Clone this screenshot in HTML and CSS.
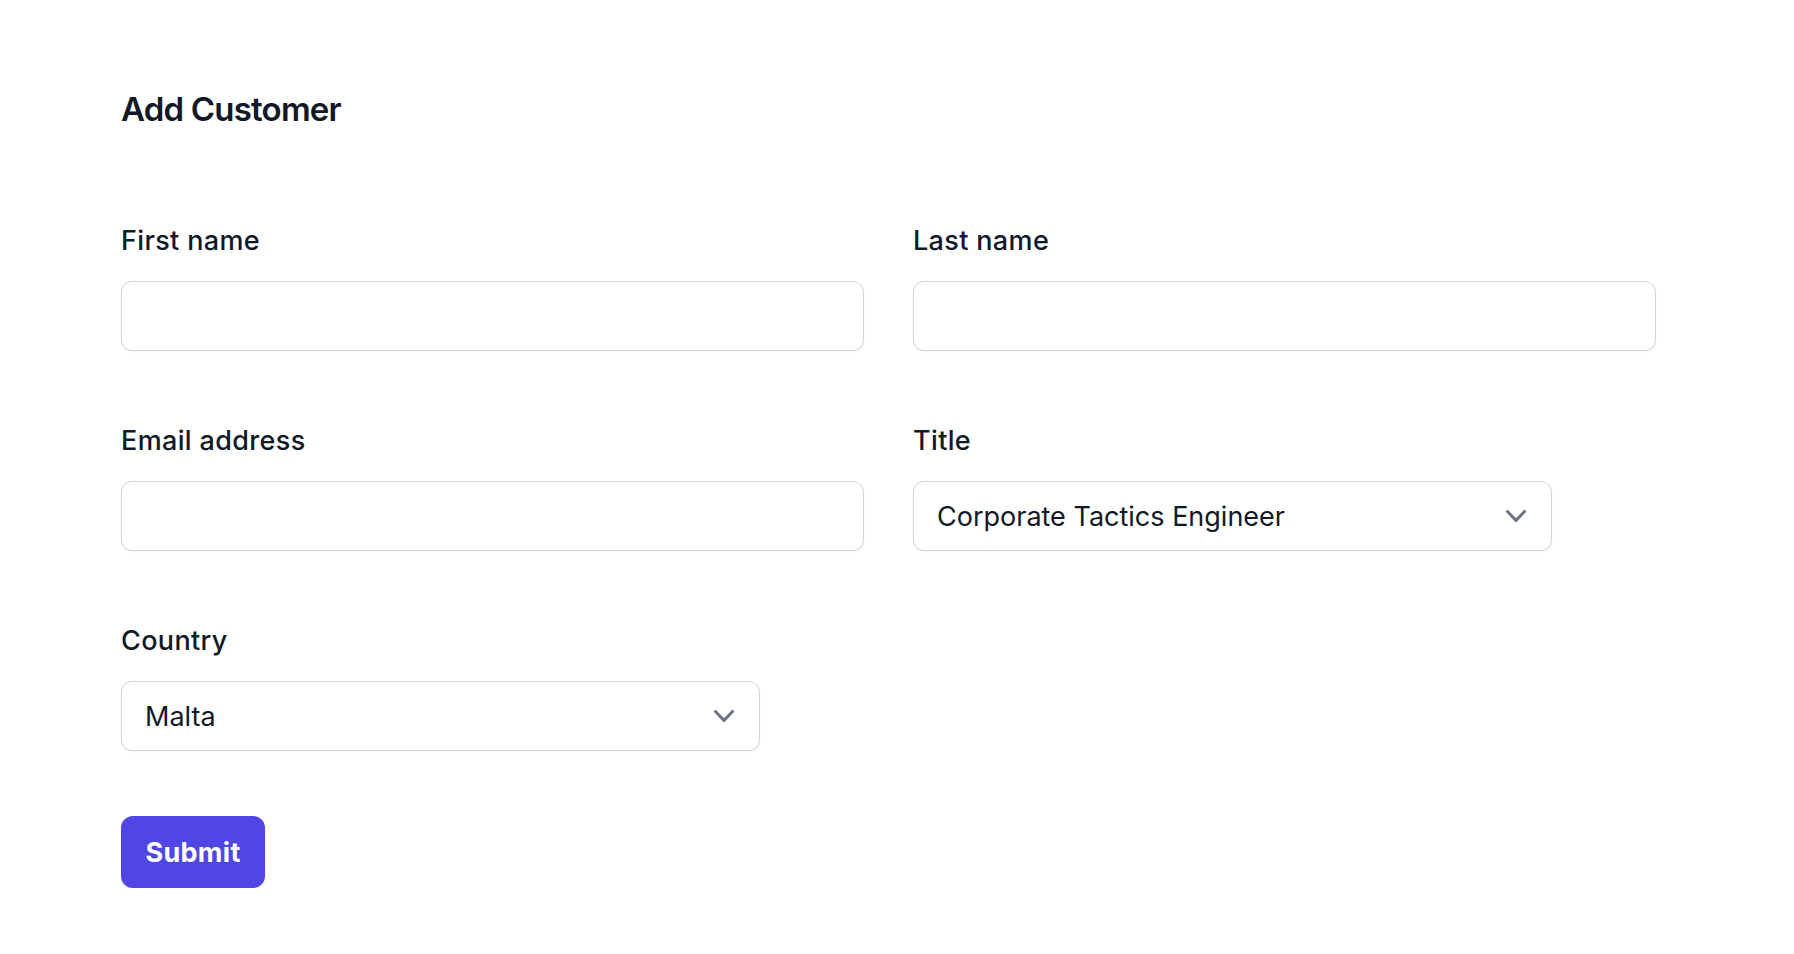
FILE: index.html
```html
<!DOCTYPE html>
<html lang="en">
<head>
<meta charset="utf-8">
<title>Add Customer</title>
<link rel="stylesheet" href="styles.css">
</head>
<body>
<main class="page">
  <h1 class="heading">Add Customer</h1>
  <form class="form">
    <div class="grid">
      <div class="field">
        <label class="label" for="first">First name</label>
        <input class="control" id="first" type="text">
      </div>
      <div class="field">
        <label class="label" for="last">Last name</label>
        <input class="control" id="last" type="text">
      </div>
      <div class="field">
        <label class="label" for="email">Email address</label>
        <input class="control" id="email" type="email">
      </div>
      <div class="field">
        <label class="label" for="title">Title</label>
        <div class="select-wrap">
          <select class="control select" id="title">
            <option>Corporate Tactics Engineer</option>
          </select>
          <svg class="chevron" viewBox="0 0 20 20" fill="currentColor" aria-hidden="true"><path fill-rule="evenodd" d="M5.23 7.21a.75.75 0 011.06.02L10 11.168l3.71-3.938a.75.75 0 111.08 1.04l-4.25 4.5a.75.75 0 01-1.08 0l-4.25-4.5a.75.75 0 01.02-1.06z" clip-rule="evenodd"/></svg>
        </div>
      </div>
      <div class="field">
        <label class="label" for="country">Country</label>
        <div class="select-wrap">
          <select class="control select" id="country">
            <option>Malta</option>
          </select>
          <svg class="chevron" viewBox="0 0 20 20" fill="currentColor" aria-hidden="true"><path fill-rule="evenodd" d="M5.23 7.21a.75.75 0 011.06.02L10 11.168l3.71-3.938a.75.75 0 111.08 1.04l-4.25 4.5a.75.75 0 01-1.08 0l-4.25-4.5a.75.75 0 01.02-1.06z" clip-rule="evenodd"/></svg>
        </div>
      </div>
    </div>
    <div class="actions">
      <button class="submit" type="button">Submit</button>
    </div>
  </form>
</main>
</body>
</html>
```
FILE: styles.css
```css
* { box-sizing: border-box; }
html, body { margin: 0; background: #ffffff; }
body {
  font-family: Inter, "Noto Sans", "Liberation Sans", sans-serif;
  color: #111827;
}
.page {
  padding: 89px 0 0 121px;
}
.heading {
  margin: 0;
  font-size: 33px;
  line-height: 40px;
  font-weight: 600;
  letter-spacing: -0.8px;
  color: #111827;
}
.form {
  margin-top: 94px;
}
.grid {
  display: grid;
  grid-template-columns: 743px 743px;
  column-gap: 49px;
  row-gap: 72px;
}
.field {
  display: flex;
  flex-direction: column;
  gap: 22px;
}
.label {
  font-size: 27px;
  line-height: 36px;
  font-weight: 500;
  letter-spacing: 0.35px;
  color: #111827;
}
.control {
  display: block;
  width: 100%;
  height: 70px;
  margin: 0;
  padding: 0 23px;
  border: 1px solid #d1d5db;
  border-radius: 11px;
  background: #ffffff;
  box-shadow: 0 1px 2px rgba(0, 0, 0, 0.06);
  font-family: inherit;
  font-size: 27px;
  color: #111827;
  outline: none;
}
.select-wrap {
  position: relative;
  width: 639px;
}
.select {
  appearance: none;
  -webkit-appearance: none;
  padding-right: 70px;
}
.chevron {
  position: absolute;
  right: 16px;
  top: 15px;
  width: 40px;
  height: 40px;
  color: #6b7280;
  pointer-events: none;
}
.actions {
  margin-top: 65px;
}
.submit {
  display: block;
  width: 144px;
  height: 72px;
  padding: 0;
  border: none;
  border-radius: 12px;
  background: #4f46e5;
  color: #ffffff;
  font-family: inherit;
  font-size: 27px;
  font-weight: 700;
  letter-spacing: 0.3px;
  box-shadow: 0 1px 2px rgba(0, 0, 0, 0.08);
  cursor: pointer;
}
```
